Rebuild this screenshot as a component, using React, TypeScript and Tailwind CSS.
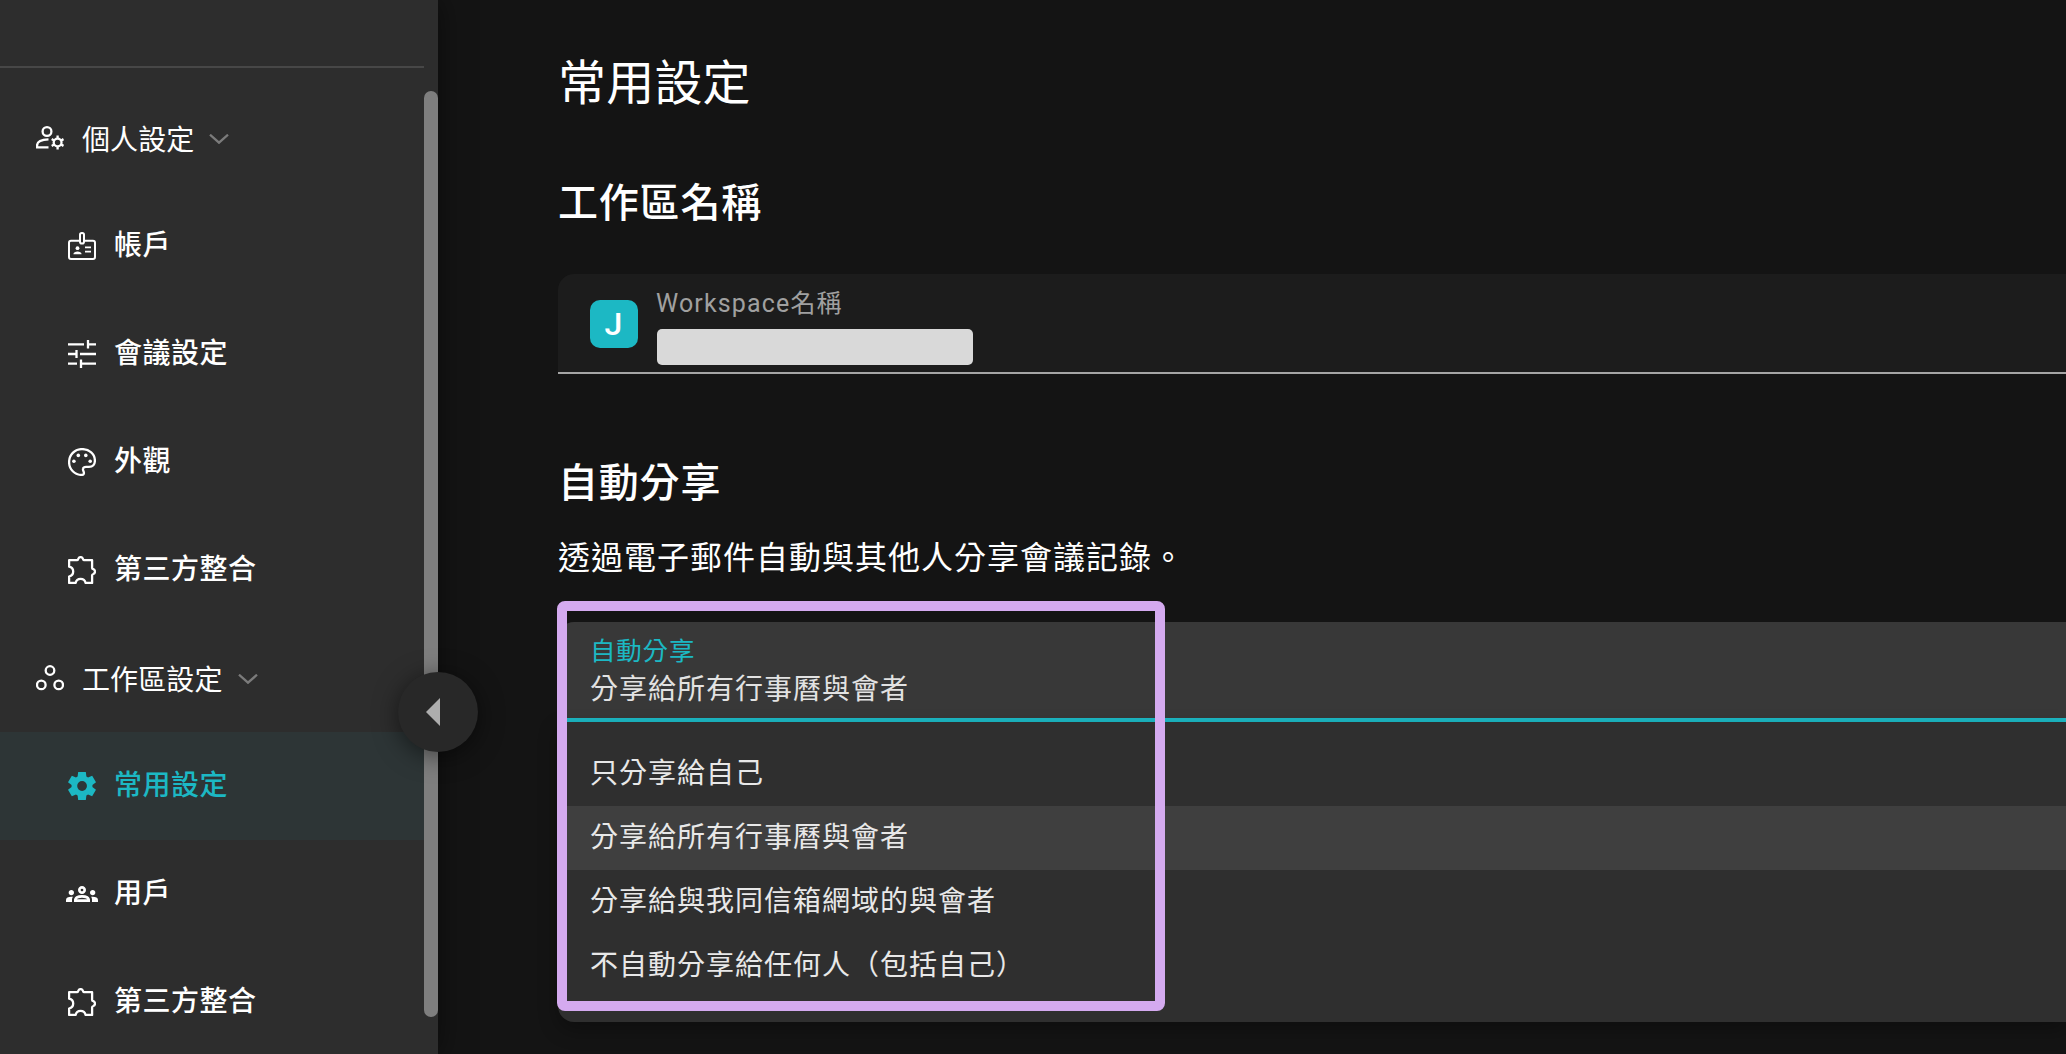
import type { ReactNode } from "react";

function Icon({ children, className = "size-7" }: { children: ReactNode; className?: string }) {
  return (
    <svg viewBox="0 0 28 28" fill="none" stroke="currentColor" strokeWidth="2.3" className={`shrink-0 ${className}`}>
      {children}
    </svg>
  );
}

const UserCog = () => (
  <Icon>
    <circle cx="11" cy="7.5" r="4.4" />
    <path d="M12.500 23.400H1.100v-2.200c0-4 5.400-5.500 11.400-5.800" />
    <circle cx="21.600" cy="18.500" r="3.900" />
    <path d="M21.600 14.800v-3.200M21.600 22.200v3.200M18.400 16.700l-2.700-1.600M24.800 16.700l2.700-1.600M18.400 20.300l-2.700 1.600M24.800 20.300l2.700 1.600" />
  </Icon>
);

const Badge = () => (
  <Icon>
    <path d="M12 8.700H3a2 2 0 0 0-2 2V25a2 2 0 0 0 2 2h22a2 2 0 0 0 2-2V10.700a2 2 0 0 0-2-2h-9" strokeWidth="2" />
    <rect x="12" y="1" width="4" height="10.500" rx="1.800" strokeWidth="2" />
    <circle cx="9.500" cy="16.200" r="1.900" fill="currentColor" stroke="none" />
    <path d="M5.400 22.200c0-2 2-2.800 4.100-2.800s4.100.8 4.100 2.800z" fill="currentColor" stroke="none" />
    <path d="M17 15.300h6M17 19.700h6" strokeWidth="1.800" />
  </Icon>
);

const Tune = () => (
  <Icon>
    <path d="M0 4.300h16M20 4.300h8M20 0v8.600M0 14h8.500M8.500 10v8M12 14h16M0 23.600h9M13 19.500v8.500M13 23.600h15" />
  </Icon>
);

const Palette = () => (
  <Icon>
    <path d="M14 1.100C6.600 1.100 1.100 6.900 1.100 14.200 1.100 21.300 6.800 26.900 13.600 26.900c1.800 0 2.700-1 2.200-2.800-.5-1.500-1.100-2.300-.8-3.400.3-1.300 1.600-1.800 3.100-1.800H21c3.800 0 5.900-2.600 5.900-6.200C26.900 6 21.300 1.100 14 1.100z" />
    <g fill="currentColor" stroke="none">
      <circle cx="10.300" cy="7.400" r="1.800" />
      <circle cx="17.800" cy="7.400" r="1.800" />
      <circle cx="5.900" cy="13.200" r="1.800" />
      <circle cx="22.200" cy="13.200" r="1.800" />
    </g>
  </Icon>
);

const Puzzle = () => (
  <Icon>
    <path
      strokeLinejoin="round"
      d="M1.100 4.200h7.900c.9 0 1-.6 1.200-1.200.4-1.200 1.300-1.900 2.400-1.900s2 .7 2.400 1.900c.2.600.3 1.200 1.200 1.200h7.900v7.800c0 .8.600 1 1.200 1.200 1.100.4 1.700 1.300 1.700 2.400s-.6 2-1.700 2.400c-.6.2-1.200.4-1.200 1.200v7.700h-6.500c-.6-2.500-2.400-4-5-4s-4.400 1.500-5 4H1.100v-6.400c2.500-.6 4.100-2.300 4.100-4.900s-1.600-4.300-4.100-4.900z"
    />
  </Icon>
);

const Workspaces = () => (
  <Icon>
    <circle cx="14" cy="6.500" r="4.300" />
    <circle cx="5.300" cy="20.900" r="4.300" />
    <circle cx="22.700" cy="20.900" r="4.300" />
  </Icon>
);

const Gear = () => (
  <svg viewBox="78 -880 804 800" fill="currentColor" className="size-7 shrink-0">
    <path d="m370-80-16-128q-13-5-24.500-12T307-235l-119 50L78-375l103-78q-1-7-1-13.500v-27q0-6.500 1-13.500L78-585l110-190 119 50q11-8 23-15t24-12l16-128h220l16 128q13 5 24.500 12t22.500 15l119-50 110 190-103 78q1 7 1 13.500v27q0 6.500-2 13.500l103 78-110 190-118-50q-11 8-23 15t-24 12L590-80H370Zm112-260q58 0 99-41t41-99q0-58-41-99t-99-41q-59 0-99.500 41T342-480q0 58 40.500 99t99.500 41Z" />
  </svg>
);

const Groups = () => (
  <svg viewBox="0 -960 960 960" fill="currentColor" className="-mx-0.5 size-8 shrink-0">
    <path d="M0-240v-63q0-43 44-70t116-27q13 0 25 .5t23 2.500q-14 21-21 44t-7 48v65H0Zm240 0v-65q0-32 17.500-58.500T307-410q32-20 76.500-30t96.500-10q53 0 97.500 10t76.500 30q32 20 49 46.500t17 58.500v65H240Zm540 0v-65q0-26-6.500-49T754-397q11-2 22.500-2.500t23.500-.5q72 0 116 26.500t44 70.500v63H780Zm-455-80h311q-10-20-55.500-35T480-370q-55 0-100.500 15T325-320ZM160-440q-33 0-56.500-23.500T80-520q0-34 23.500-57t56.500-23q34 0 57 23t23 57q0 33-23 56.500T160-440Zm640 0q-33 0-56.500-23.500T720-520q0-34 23.500-57t56.500-23q34 0 57 23t23 57q0 33-23 56.500T800-440Zm-320-40q-50 0-85-35t-35-85q0-51 35-85.500t85-34.500q51 0 85.500 34.500T600-600q0 50-34.500 85T480-480Zm0-80q17 0 28.500-11.500T520-600q0-17-11.500-28.500T480-640q-17 0-28.500 11.500T440-600q0 17 11.500 28.500T480-560Z" />
  </svg>
);

const Chevron = () => (
  <svg viewBox="0 0 20 10" fill="none" stroke="#7b7b7b" strokeWidth="2.300" className="mt-px h-2.5 w-5">
    <path d="M1 .7l9 8 9-8" />
  </svg>
);

function GroupHeader({ icon, label }: { icon: ReactNode; label: string }) {
  return (
    <div className="flex h-[108px] items-center pl-9 text-[28px] leading-10 tracking-[0.1px]">
      {icon}
      <span className="mt-1.5 mr-[15px] ml-[18px]">{label}</span>
      <Chevron />
    </div>
  );
}

function NavItem({ icon, label, active = false }: { icon: ReactNode; label: string; active?: boolean }) {
  return (
    <div
      className={`flex h-[108px] items-center gap-[18px] pl-[68px] text-[28px] leading-10 font-medium tracking-[0.5px] ${
        active ? "bg-[#2d3536] text-[#1cb8c4]" : ""
      }`}
    >
      {icon}
      <span>{label}</span>
    </div>
  );
}

const options = ["只分享給自己", "分享給所有行事曆與會者", "分享給與我同信箱網域的與會者", "不自動分享給任何人（包括自己）"];

export default function App() {
  return (
    <div
      lang="zh-TW"
      className="relative flex h-[1054px] w-[2066px] overflow-hidden bg-[#141414] font-[Roboto,'Noto_Sans_CJK_TC',sans-serif] text-white"
    >
      <aside className="relative z-10 flex h-full w-[438px] shrink-0 bg-[#2d2d2d] shadow-[0_0_28px_rgba(0,0,0,0.5)]">
        <nav className="w-[424px] overflow-hidden">
          <div className="h-[68px] border-b-2 border-[#474747]" />
          <div className="pt-4">
            <GroupHeader icon={<UserCog />} label="個人設定" />
            <NavItem icon={<Badge />} label="帳戶" />
            <NavItem icon={<Tune />} label="會議設定" />
            <NavItem icon={<Palette />} label="外觀" />
            <NavItem icon={<Puzzle />} label="第三方整合" />
            <GroupHeader icon={<Workspaces />} label="工作區設定" />
            <NavItem icon={<Gear />} label="常用設定" active />
            <NavItem icon={<Groups />} label="用戶" />
            <NavItem icon={<Puzzle />} label="第三方整合" />
          </div>
        </nav>
        <div className="mt-[91px] h-[926px] w-3.5 rounded-full bg-[#7e7e7e]" />
        <button className="absolute top-[672px] -right-10 flex size-20 items-center justify-center rounded-full bg-[#282828] shadow-[0_4px_24px_rgba(0,0,0,0.5)]">
          <svg viewBox="0 0 14 28" fill="#adadad" className="mr-2.5 h-7 w-3.5">
            <path d="M14 0v28L0 14z" />
          </svg>
        </button>
      </aside>

      <main className="flex-1 pt-[52px] pl-[120px]">
        <h1 className="text-[48px] leading-[64px] tracking-[0.2px]">常用設定</h1>
        <h2 className="mt-14 text-[40px] leading-[64px] font-medium tracking-[0.8px]">工作區名稱</h2>

        <div className="mt-[38px] flex h-[100px] rounded-tl-2xl border-b-2 border-[#a5a5a5] bg-[#1c1c1c] pl-8">
          <div className="mt-[26px] flex size-12 items-center justify-center rounded-[10px] bg-[#1cb8c4] pr-px text-[32px] font-medium">
            J
          </div>
          <div className="ml-[18px] pt-3">
            <div className="text-[25px] leading-9 tracking-[1.15px] text-[#a0a0a0]">Workspace名稱</div>
            <div className="mt-[7px] ml-px h-9 w-[316px] rounded-[5px] bg-[#d9d9d9]" />
          </div>
        </div>

        <h2 className="mt-[78px] text-[40px] leading-[64px] font-medium tracking-[0.8px]">自動分享</h2>
        <p className="mt-3.5 text-[32px] leading-[56px] tracking-[1px]">透過電子郵件自動與其他人分享會議記錄。</p>

        <div className="relative mt-9">
          <div className="h-[100px] rounded-tl-2xl border-b-4 border-[#1cb8c4] bg-[#383838] pt-[11px] pl-8">
            <div className="mb-px text-[25.5px] leading-9 tracking-[0.8px] text-[#1cb8c4]">自動分享</div>
            <div className="text-[28px] leading-10 tracking-[1px] text-[#e2e2e2]">分享給所有行事曆與會者</div>
          </div>
          <div className="h-[300px] rounded-bl-2xl bg-[#2f2f2f] pt-5 shadow-[0_8px_20px_rgba(0,0,0,0.3)]">
            {options.map((option, i) => (
              <div
                key={option}
                className={`h-16 pl-8 text-[28px] leading-[64px] tracking-[1px] text-[#e8e8e8] ${i === 1 ? "bg-[#3f3f3f]" : ""}`}
              >
                {option}
              </div>
            ))}
          </div>
          <div className="absolute -top-[21px] -left-px h-[410px] w-[608px] rounded-lg border-10 border-[#d4aaef]" />
        </div>
      </main>
    </div>
  );
}
